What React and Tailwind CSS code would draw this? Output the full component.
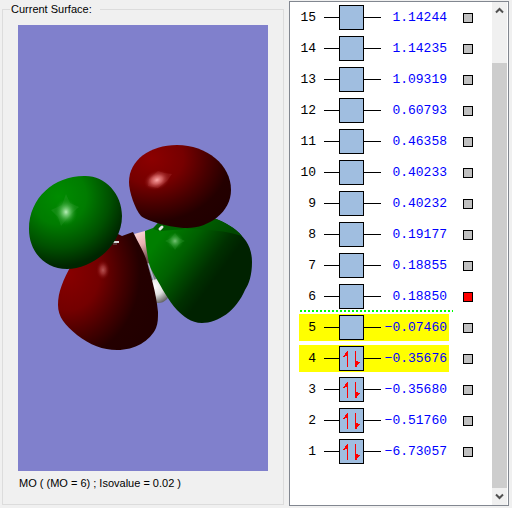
import { useState } from 'react';
import clsx from 'clsx';

const orbitals = [
  { id: 15, energy: '1.14244' },
  { id: 14, energy: '1.14235' },
  { id: 13, energy: '1.09319' },
  { id: 12, energy: '0.60793' },
  { id: 11, energy: '0.46358' },
  { id: 10, energy: '0.40233' },
  { id: 9, energy: '0.40232' },
  { id: 8, energy: '0.19177' },
  { id: 7, energy: '0.18855' },
  { id: 6, energy: '0.18850' },
  { id: 5, energy: '−0.07460', highlighted: true },
  { id: 4, energy: '−0.35676', highlighted: true, occupied: true },
  { id: 3, energy: '−0.35680', occupied: true },
  { id: 2, energy: '−0.51760', occupied: true },
  { id: 1, energy: '−6.73057', occupied: true },
];

function SpinPair() {
  return (
    <svg viewBox="0 0 23 23" className="w-full h-full" shapeRendering="crispEdges">
      <path d="M7 4h1v16h-1zM3 9h1v-1h1v-2h1v-1h1v4h-2v1h-2z" fill="#f00" />
      <path d="M15 4h1v16h-1zM16 14h2v1h2v1h-1v1h-1v1h-1v2h-1z" fill="#f00" />
    </svg>
  );
}

function OrbitalRow({ orbital, selected, onToggle }) {
  const { id, energy, highlighted, occupied } = orbital;
  return (
    <li className="relative h-[31px] py-0.5">
      <label
        htmlFor={`mo-${id}`}
        className={clsx('flex items-center h-[27px] w-[150px]', highlighted && 'bg-[#ffff00]')}
      >
        <span className="w-[17px] text-right text-black">{id}</span>
        <span className="ml-2 w-[15px] h-px bg-black" />
        <span className="w-[25px] h-[25px] border border-black bg-[#a0bee0]">
          {occupied && <SpinPair />}
        </span>
        <span className="w-[17px] h-px bg-black" />
        <span className="flex-1 pr-0.5 text-right text-[#0000ff]">{energy}</span>
      </label>
      <input
        id={`mo-${id}`}
        type="checkbox"
        checked={selected}
        onChange={() => onToggle(id)}
        className="absolute left-[164px] top-[11px] w-2.5 h-2.5 appearance-none border border-black bg-[#c0c0c0] checked:bg-[#ff0000]"
      />
      {id === 6 && (
        <span className="absolute left-px bottom-0 w-[153px] h-0.5 bg-[repeating-linear-gradient(90deg,#00ff00_0_2px,transparent_2px_4px)]" />
      )}
    </li>
  );
}

function OrbitalSurface() {
  return (
    <svg viewBox="18 25 250 446" className="w-full h-full" role="img" aria-label="Molecular orbital surface">
      <defs>
        <radialGradient id="greenLeft" cx="0.32" cy="0.22" r="0.85">
          <stop offset="0" stopColor="#008c00" />
          <stop offset="0.35" stopColor="#007c00" />
          <stop offset="0.65" stopColor="#005000" />
          <stop offset="0.88" stopColor="#002600" />
          <stop offset="1" stopColor="#002200" />
        </radialGradient>
        <radialGradient id="redTop" cx="0.22" cy="0.16" r="0.9">
          <stop offset="0" stopColor="#8c0000" />
          <stop offset="0.35" stopColor="#760000" />
          <stop offset="0.62" stopColor="#480000" />
          <stop offset="0.85" stopColor="#240000" />
          <stop offset="1" stopColor="#220000" />
        </radialGradient>
        <radialGradient id="redBottom" cx="0.1" cy="0.35" r="0.9">
          <stop offset="0" stopColor="#880000" />
          <stop offset="0.35" stopColor="#740000" />
          <stop offset="0.6" stopColor="#460000" />
          <stop offset="0.8" stopColor="#240000" />
          <stop offset="1" stopColor="#220000" />
        </radialGradient>
        <linearGradient id="greenRight" x1="0.12" y1="0.22" x2="0.64" y2="0.6">
          <stop offset="0" stopColor="#007e00" />
          <stop offset="0.4" stopColor="#006000" />
          <stop offset="0.8" stopColor="#003000" />
          <stop offset="1" stopColor="#002200" />
        </linearGradient>
        <linearGradient id="greenBack" x1="0" y1="0" x2="1" y2="0.4">
          <stop offset="0" stopColor="#006c00" />
          <stop offset="1" stopColor="#004800" />
        </linearGradient>
        <linearGradient id="pinkBond" x1="0" y1="0" x2="0.3" y2="1">
          <stop offset="0" stopColor="#ffe0e0" />
          <stop offset="0.5" stopColor="#e8b0b0" />
          <stop offset="1" stopColor="#6a4a4a" />
        </linearGradient>
        <radialGradient id="atom" cx="0.35" cy="0.3" r="0.75">
          <stop offset="0" stopColor="#ffffff" />
          <stop offset="0.5" stopColor="#e0e0e0" />
          <stop offset="1" stopColor="#606060" />
        </radialGradient>
        <radialGradient id="greenShine">
          <stop offset="0" stopColor="#b8f0b8" />
          <stop offset="0.4" stopColor="#60c060" stopOpacity="0.75" />
          <stop offset="1" stopColor="#008000" stopOpacity="0" />
        </radialGradient>
        <radialGradient id="redShine">
          <stop offset="0" stopColor="#ffa8a8" />
          <stop offset="0.4" stopColor="#e07070" stopOpacity="0.75" />
          <stop offset="1" stopColor="#800000" stopOpacity="0" />
        </radialGradient>
      </defs>

      {/* atoms and bonds */}
      <path d="M146 261L153 284M149 260L156 282" stroke="#808088" strokeWidth="2" />
      <path d="M148 262L155 284" stroke="#c8c8cc" strokeWidth="1" />
      <circle cx="158" cy="291" r="12" fill="url(#atom)" />
      <path d="M134 234L145 231L148 243L151 264L147 263Z" fill="url(#pinkBond)" />

      {/* lower lobes */}
      <path
        d="M145 231L153 228L158 223L213 218C225 221 239 231 246 241C250 247 252 254 252 262C252 275 249 284 245 290C236 311 218 323 202 323C191 323 183 316 177 310C168 300 162 288 156 278C152 271 150 267 149 263C147 253 145 243 145 231Z"
        fill="url(#greenRight)"
      />
      <path d="M192 226L213 218C223 221 236 228 242 236C226 231 208 229 185 229Z" fill="url(#greenBack)" />
      <path d="M153 229L158 223L175 226L185 229L160 231Z" fill="#006000" />
      <path d="M175 233L179 238L185 241L179 244L175 250L171 244L165 241L171 238Z" fill="#50b050" opacity="0.2" />
      <ellipse cx="175" cy="241" rx="9" ry="9" fill="url(#greenShine)" opacity="0.6" />
      <path
        d="M105 240L118 234L122 236L133 232L137 240C141 247 145 255 147 262C149 270 151 276 153 284C155 292 157 302 158 312C158 318 158 323 156 328C150 341 135 350 117 350C103 350 90 345 77 335C65 325 58 317 58 305C58 292 63 280 72 264Z"
        fill="url(#redBottom)"
      />
      <ellipse cx="103" cy="270" rx="7" ry="10" fill="url(#redShine)" opacity="0.5" />
      <path d="M112 242H119" stroke="#d8d8d8" strokeWidth="2" />
      <path d="M113 244H117" stroke="#606060" strokeWidth="1" />

      {/* upper lobes */}
      <path
        d="M84 176C104 175 122 193 122 216C122 246 92 269 67 269C45 269 29 252 29 229C29 198 54 176 84 176Z"
        fill="url(#greenLeft)"
      />
      <path d="M66 194L70 203L79 207L71 214L61 226L58 217L51 210L62 205Z" fill="#50b050" opacity="0.2" />
      <ellipse cx="66" cy="212" rx="12" ry="14" fill="url(#greenShine)" />
      <path
        d="M177 145C207 145 231 165 231 190C231 212 209 228 187 228C171 228 147 221 141 216C135 209 129 192 129 182C129 160 150 145 177 145Z"
        fill="url(#redTop)"
      />
      <path d="M158 171L164 173L172 174L167 181L158 188L148 186L149 179Z" fill="#c04848" opacity="0.25" />
      <ellipse cx="157" cy="180" rx="14" ry="10" fill="url(#redShine)" transform="rotate(-20 157 180)" />
      <path d="M160 229L162 227" stroke="#e8e8e8" strokeWidth="3" strokeLinecap="round" />
    </svg>
  );
}

function Chevron({ up }) {
  return (
    <svg viewBox="0 0 9 7" className="w-[9px] h-[7px]">
      <path d={up ? 'M1 5.5L4.5 2L8 5.5' : 'M1 1.5L4.5 5L8 1.5'} fill="none" stroke="#505050" strokeWidth="2" />
    </svg>
  );
}

export default function App() {
  const [selected, setSelected] = useState([6]);

  const toggle = (id) => {
    setSelected((prev) => (prev.includes(id) ? prev.filter((n) => n !== id) : [...prev, id]));
  };

  return (
    <main className="flex min-h-screen bg-[#f0f0f0] pl-0.5 pr-[3px] pt-px pb-0.5 font-['Liberation_Sans',sans-serif] text-[11px] text-black">
      <fieldset className="flex flex-1 min-w-0 flex-col border border-[#dcdcdc] mb-px px-[15px] pb-[13px]">
        <legend className="-ml-2 pl-px pr-2 leading-4">Current Surface:</legend>
        <div className="relative mt-2 flex-1 bg-[#8080cc]">
          <div className="absolute inset-0">
            <OrbitalSurface />
          </div>
        </div>
        <p className="mt-1 px-px leading-4">MO ( (MO = 6) ; Isovalue = 0.02 )</p>
      </fieldset>

      <section className="ml-[5px] flex w-[220px] shrink-0 border border-[#828790] bg-white pr-px font-['Liberation_Mono',monospace] text-[13px] leading-4">
        <ul className="flex-1 pl-[9px]">
          {orbitals.map((orbital) => (
            <OrbitalRow
              key={orbital.id}
              orbital={orbital}
              selected={selected.includes(orbital.id)}
              onToggle={toggle}
            />
          ))}
        </ul>
        <div className="flex w-[15px] flex-col bg-[#f0f0f0]">
          <button type="button" aria-label="Scroll up" className="flex h-[17px] items-center justify-center">
            <Chevron up />
          </button>
          <div className="mt-11 flex-1 bg-[#cdcdcd]" />
          <button type="button" aria-label="Scroll down" className="flex h-[17px] items-center justify-center">
            <Chevron />
          </button>
        </div>
      </section>
    </main>
  );
}
